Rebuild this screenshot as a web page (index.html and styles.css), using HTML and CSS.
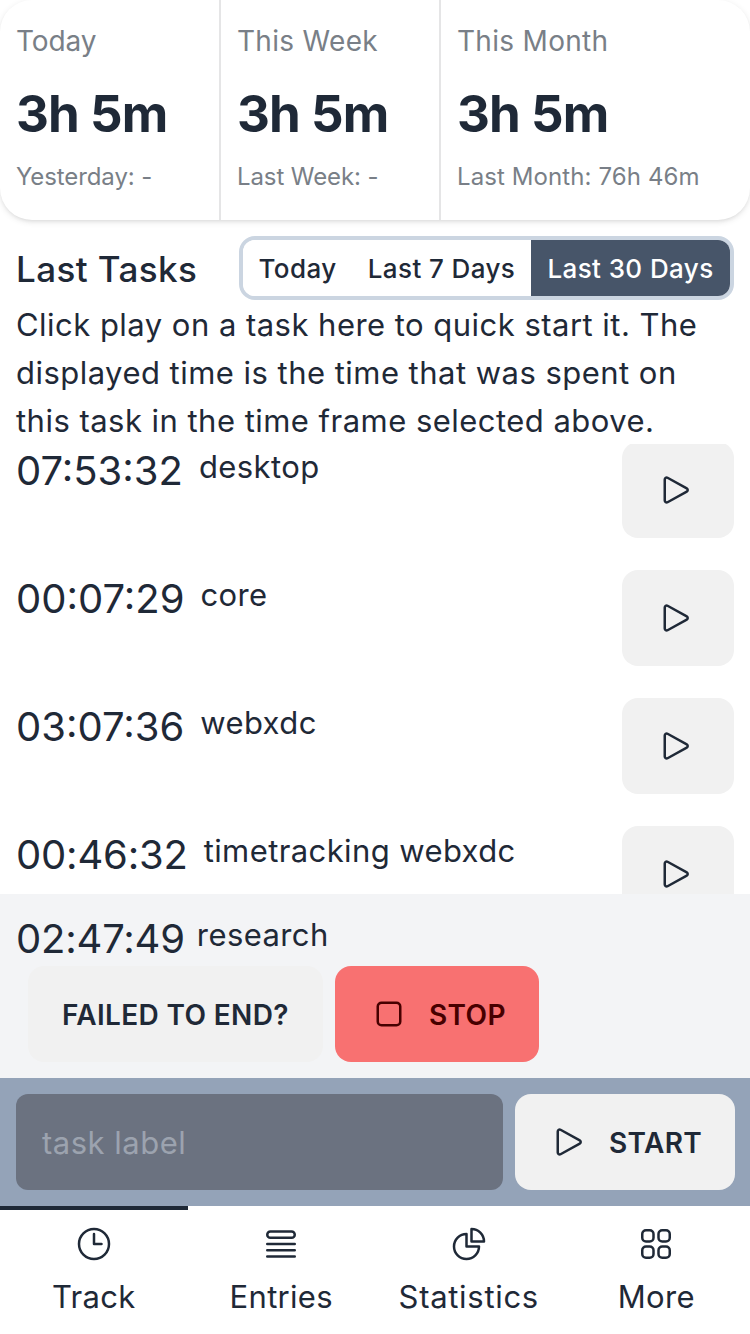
FILE: index.html
```html
<!DOCTYPE html>
<html lang="en">
<head>
<meta charset="utf-8">
<title>Time Tracking</title>
<link rel="stylesheet" href="styles.css">
</head>
<body>
<svg class="defs" aria-hidden="true">
  <symbol id="play" viewBox="0 0 24 24"><path d="M5.25 5.653c0-.856.917-1.398 1.667-.986l11.54 6.347a1.125 1.125 0 0 1 0 1.972l-11.54 6.347a1.125 1.125 0 0 1-1.667-.986V5.653Z"/></symbol>
</svg>
<div class="app">
  <header class="stats">
    <section class="stat"><div class="stat-title snug">Today</div><div class="stat-value">3h 5m</div><div class="stat-desc">Yesterday: -</div></section>
    <section class="stat"><div class="stat-title">This Week</div><div class="stat-value">3h 5m</div><div class="stat-desc">Last Week: -</div></section>
    <section class="stat"><div class="stat-title">This Month</div><div class="stat-value">3h 5m</div><div class="stat-desc wide">Last Month: 76h 46m</div></section>
  </header>
  <div class="heading">
    <h1 class="title">Last Tasks</h1>
    <div class="tabs"><button class="tab">Today</button><button class="tab">Last 7 Days</button><button class="tab active">Last 30 Days</button></div>
  </div>
  <p class="intro">Click play on a task here to quick start it. The<br>displayed time is the time that was spent on<br>this task in the time frame selected above.</p>
  <main class="tasks">
    <div class="task"><span class="time">07:53:32</span><span class="label">desktop</span><button class="btn play"><svg class="icon"><use href="#play"/></svg></button></div>
    <div class="task"><span class="time">00:07:29</span><span class="label">core</span><button class="btn play"><svg class="icon"><use href="#play"/></svg></button></div>
    <div class="task"><span class="time">03:07:36</span><span class="label">webxdc</span><button class="btn play"><svg class="icon"><use href="#play"/></svg></button></div>
    <div class="task"><span class="time tight">00:46:32</span><span class="label">timetracking webxdc</span><button class="btn play"><svg class="icon"><use href="#play"/></svg></button></div>
  </main>
  <section class="running">
    <div class="current"><span class="time tight">02:47:49</span><span class="label">research</span></div>
    <div class="actions">
      <button class="btn failed"><span>FAILED TO END?</span></button>
      <button class="btn stop"><svg class="icon" viewBox="0 0 24 24"><path d="M5.25 7.5A2.25 2.25 0 0 1 7.5 5.25h9a2.25 2.25 0 0 1 2.25 2.25v9a2.25 2.25 0 0 1-2.25 2.25h-9a2.25 2.25 0 0 1-2.25-2.25v-9Z"/></svg><span>STOP</span></button>
    </div>
  </section>
  <section class="new-task">
    <input class="input" type="text" placeholder="task label">
    <button class="btn start"><svg class="icon"><use href="#play"/></svg><span>START</span></button>
  </section>
  <nav class="nav">
    <a class="nav-item current-page"><svg class="icon" viewBox="0 0 24 24"><path d="M12 6v6h4.5m4.5 0a9 9 0 1 1-18 0 9 9 0 0 1 18 0Z"/></svg><span>Track</span></a>
    <a class="nav-item"><svg class="icon" viewBox="0 0 24 24"><path d="M3.75 12h16.5m-16.5 3.75h16.5M3.75 19.5h16.5M5.625 4.5h12.75a1.875 1.875 0 0 1 0 3.75H5.625a1.875 1.875 0 0 1 0-3.75Z"/></svg><span>Entries</span></a>
    <a class="nav-item"><svg class="icon" viewBox="0 0 24 24"><path d="M10.5 6a7.5 7.5 0 1 0 7.5 7.5h-7.5V6Z"/><path d="M13.5 10.5H21A7.5 7.5 0 0 0 13.5 3v7.5Z"/></svg><span class="wide">Statistics</span></a>
    <a class="nav-item"><svg class="icon" viewBox="0 0 24 24"><path d="M3.75 6A2.25 2.25 0 0 1 6 3.75h2.25A2.25 2.25 0 0 1 10.5 6v2.25a2.25 2.25 0 0 1-2.25 2.25H6a2.25 2.25 0 0 1-2.25-2.25V6ZM3.75 15.75A2.25 2.25 0 0 1 6 13.5h2.25a2.25 2.25 0 0 1 2.25 2.25V18a2.25 2.25 0 0 1-2.25 2.25H6A2.25 2.25 0 0 1 3.75 18v-2.25ZM13.5 6a2.25 2.25 0 0 1 2.25-2.25H18A2.25 2.25 0 0 1 20.25 6v2.25A2.25 2.25 0 0 1 18 10.5h-2.25a2.25 2.25 0 0 1-2.25-2.25V6ZM13.5 15.75a2.25 2.25 0 0 1 2.25-2.25H18a2.25 2.25 0 0 1 2.25 2.25V18A2.25 2.25 0 0 1 18 20.25h-2.25A2.25 2.25 0 0 1 13.5 18v-2.25Z"/></svg><span>More</span></a>
  </nav>
</div>
</body>
</html>
```
FILE: styles.css
```css
* { box-sizing: border-box; }
body { margin: 0; background: #fff; color: #1f2937; font-family: Inter, "Liberation Sans", sans-serif; font-size: 31px; line-height: 48px; }
button, input { font: inherit; color: inherit; border: 0; margin: 0; padding: 0; }
.defs { position: absolute; width: 0; height: 0; }
.app { display: flex; flex-direction: column; width: 750px; height: 1334px; overflow: hidden; }

.stats { display: grid; grid-template-columns: 221px 220px 309px; flex: none; height: 220px; border-radius: 32px; background: #fff; box-shadow: 0 2px 6px rgba(0,0,0,.1), 0 2px 4px -2px rgba(0,0,0,.1); }
.stat { padding: 17px 0 0 16px; border-right: 2px solid #e5e5e6; white-space: nowrap; }
.stat:last-child { border-right: 0; }
.stat-title { font-size: 28px; color: #797f87; letter-spacing: .3px; }
.stat-title.snug { letter-spacing: -.1px; }
.stat-value { margin-top: 9px; font-size: 51px; line-height: 80px; font-weight: 700; letter-spacing: -.9px; }
.stat-desc { margin-top: -1px; font-size: 24px; line-height: 48px; color: #797f87; letter-spacing: -.1px; }
.stat-desc.wide { letter-spacing: .1px; }

.heading { display: flex; flex: none; align-items: center; justify-content: space-between; height: 64px; margin-top: 16px; padding: 0 16px; }
.title { margin: 1px 0 0; font-size: 35px; line-height: 56px; font-weight: 500; letter-spacing: .4px; }
.tabs { display: flex; width: 495px; height: 64px; border: 4px solid #cbd5e1; border-radius: 16px; overflow: hidden; }
.tab { flex: none; background: #fff; font-size: 26px; font-weight: 500; letter-spacing: .4px; line-height: 58px; white-space: nowrap; }
.tab:nth-child(1) { width: 109px; }
.tab:nth-child(2) { width: 179px; }
.tab.active { width: 199px; background: #475569; color: #fff; }
.intro { flex: none; margin: 0; padding: 1px 0 0 16px; height: 144px; letter-spacing: .47px; white-space: nowrap; }

.tasks { flex: none; height: 450px; overflow: hidden; }
.task { display: flex; align-items: flex-start; height: 128px; padding: 0 16px; }
.tasks .task:first-child { margin-top: -2px; }
.time { margin-right: 16px; font-size: 40px; line-height: 58px; letter-spacing: 0; white-space: nowrap; }
.time.tight { letter-spacing: -.2px; }
.label { flex: 1; line-height: 50px; letter-spacing: .4px; white-space: nowrap; }

.btn { display: flex; flex: none; align-items: center; height: 96px; border-radius: 16px; background: #f1f1f1; font-size: 28px; font-weight: 600; letter-spacing: .35px; white-space: nowrap; }
.btn span { padding-top: 2px; }
.icon { flex: none; width: 40px; height: 40px; fill: none; stroke: currentColor; stroke-width: 1.5; stroke-linecap: round; stroke-linejoin: round; }
.play { width: 112px; padding-left: 34px; }

.running { flex: none; height: 184px; padding-top: 16px; background: #f3f4f6; }
.current { display: flex; height: 56px; padding-left: 16px; }
.current .time { margin-right: 12px; }
.actions { display: flex; gap: 12px; padding-left: 28px; }
.failed { width: 295px; padding-left: 34px; }
.stop { width: 204px; padding-left: 34px; gap: 20px; background: #f87171; color: #470000; }

.new-task { display: flex; flex: none; gap: 12px; height: 128px; padding: 16px; background: #94a3b8; }
.input { width: 487px; height: 96px; padding: 0 26px; border-radius: 12px; background: #6b7280; letter-spacing: .5px; }
.input::placeholder { color: #9ca3af; opacity: 1; }
.start { width: 220px; padding-left: 34px; gap: 20px; }

.nav { display: grid; flex: none; grid-template-columns: repeat(4, 1fr); height: 128px; }
.nav-item { display: flex; flex-direction: column; align-items: center; gap: 9px; padding-top: 14px; border-top: 4px solid transparent; letter-spacing: .3px; }
.nav-item .wide { letter-spacing: .7px; }
.current-page { border-color: #1f2937; }
```
